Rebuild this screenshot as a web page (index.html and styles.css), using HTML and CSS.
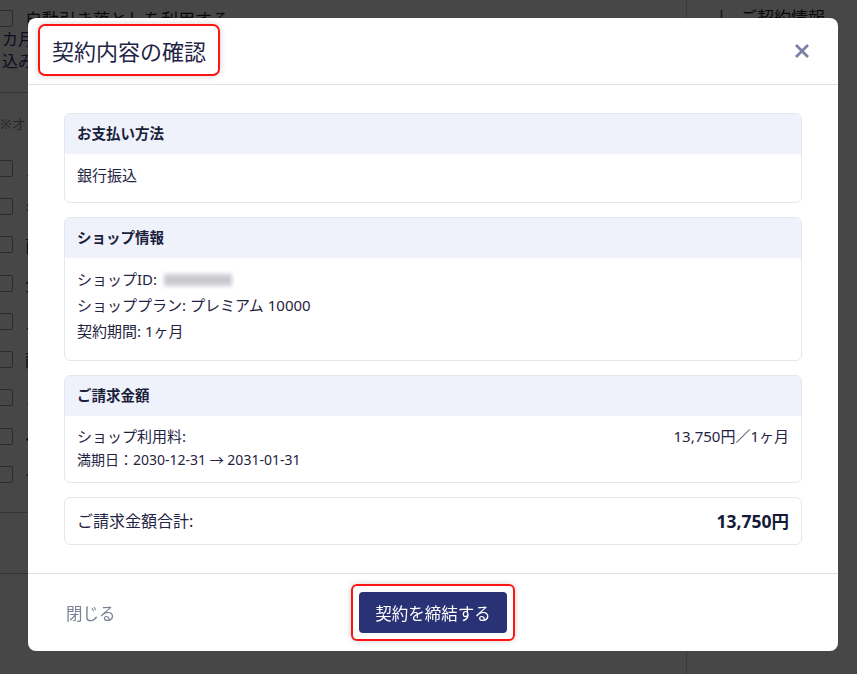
FILE: index.html
```html
<!DOCTYPE html>
<html lang="ja">
<head>
<meta charset="utf-8">
<title>契約内容の確認</title>
<link rel="stylesheet" href="styles.css">
</head>
<body>
<div class="page">
  <div class="page-main">
    <div class="bg-row bg-top"><span class="bg-check"></span><span class="bg-text">自動引き落としを利用する</span></div>
    <div class="bg-link">カ月</div>
    <div class="bg-link">込みを</div>
    <hr class="bg-hr">
    <div class="bg-note">※オ</div>
    <div class="bg-list">
      <div class="bg-row"><span class="bg-check"></span><span class="bg-text">メ</span></div>
      <div class="bg-row"><span class="bg-check"></span><span class="bg-text">キ</span></div>
      <div class="bg-row"><span class="bg-check"></span><span class="bg-text">商</span></div>
      <div class="bg-row"><span class="bg-check"></span><span class="bg-text">全</span></div>
      <div class="bg-row"><span class="bg-check"></span><span class="bg-text">ス</span></div>
      <div class="bg-row"><span class="bg-check"></span><span class="bg-text">配</span></div>
      <div class="bg-row"><span class="bg-check"></span><span class="bg-text">メ</span></div>
      <div class="bg-row"><span class="bg-check"></span><span class="bg-text">ペ</span></div>
      <div class="bg-row"><span class="bg-check"></span><span class="bg-text">ー</span></div>
    </div>
    <hr class="bg-hr bg-hr2">
    <hr class="bg-hr bg-hr3">
  </div>
  <div class="page-side">
    <div class="side-head"><span class="side-icon">↓</span>ご契約情報</div>
  </div>
</div>

<div class="overlay">
  <div class="modal">
    <div class="modal-header">
      <h2 class="modal-title">契約内容の確認</h2>
      <button class="modal-close" aria-label="閉じる">
        <svg width="16" height="16" viewBox="0 0 16 16"><path d="M2 2L14 14M14 2L2 14" stroke="#7a80a6" stroke-width="2.8" stroke-linecap="butt"/></svg>
      </button>
    </div>
    <div class="modal-body">
      <section class="card">
        <div class="card-head">お支払い方法</div>
        <div class="card-body">銀行振込</div>
      </section>
      <section class="card">
        <div class="card-head">ショップ情報</div>
        <div class="card-body info">
          <div>ショップID: <span class="blurred"></span></div>
          <div>ショッププラン: プレミアム 10000</div>
          <div>契約期間: 1ヶ月</div>
        </div>
      </section>
      <section class="card">
        <div class="card-head">ご請求金額</div>
        <div class="card-body bill">
          <div class="bill-row"><span>ショップ利用料:</span><span>13,750円／1ヶ月</span></div>
          <div class="bill-sub">満期日：2030-12-31 → 2031-01-31</div>
        </div>
      </section>
      <section class="card total">
        <span>ご請求金額合計:</span><strong>13,750円</strong>
      </section>
    </div>
    <div class="modal-footer">
      <a class="close-link">閉じる</a>
      <div class="btn-mark"><button class="btn-primary">契約を締結する</button></div>
      <span></span>
    </div>
  </div>
</div>
</body>
</html>
```
FILE: styles.css
```css
* { box-sizing: border-box; }
html, body { margin: 0; padding: 0; }
body {
  width: 857px;
  height: 674px;
  overflow: hidden;
  background: #fff;
  font-family: "Noto Sans", "Noto Sans CJK JP", sans-serif;
  color: #1f2442;
}

/* background page */
.page { display: flex; height: 674px; }
.page-main { width: 691px; margin-left: -4px; border-right: 1px solid #ccc; }
.bg-row { display: flex; align-items: center; gap: 12px; height: 38.3px; }
.bg-top { height: 20px; margin-top: 8px; }
.bg-check { width: 17px; height: 17px; border: 1.5px solid #999; border-radius: 2px; flex: none; }
.bg-text { font-size: 17px; color: #222; }
.bg-link { font-size: 16px; color: #2a3275; line-height: 22px; padding-left: 6px; }
.bg-link:first-of-type { margin-top: 2px; }
.bg-hr { border: 0; border-top: 1px solid #bbb; margin: 20px 0 20px; }
.bg-note { font-size: 14px; color: #888; padding-left: 4px; margin-bottom: 16px; }
.bg-list { display: flex; flex-direction: column; }
.bg-hr2 { margin-top: 18px; }
.bg-hr3 { margin-top: 60px; }
.page-side { flex: 1; padding: 4px 0 0 26px; }
.side-head { font-size: 17px; color: #222; display: flex; gap: 10px; }
.side-icon { color: #2a3275; }

/* overlay & modal */
.overlay {
  position: fixed;
  inset: 0;
  background: rgba(0, 0, 0, 0.72);
  display: flex;
  align-items: flex-start;
}
.modal {
  margin: 18px 0 0 28px;
  width: 810px;
  height: 633px;
  background: #fff;
  border-radius: 8px;
  display: flex;
  flex-direction: column;
}
.modal-header {
  height: 67px;
  flex: none;
  display: flex;
  align-items: center;
  justify-content: space-between;
  padding: 0 28px 0 10px;
  border-bottom: 1px solid #dde1ec;
}
.modal-title {
  margin: 0 0 2px;
  height: 52px;
  display: flex;
  align-items: center;
  padding: 0 12px;
  font-size: 22px;
  font-weight: 400;
  color: #1f2547;
  border: 2px solid #ff1414;
  border-radius: 7px;
  box-shadow: 0 0 6px rgba(0,0,0,0.18);
}
.modal-close {
  border: 0;
  background: none;
  padding: 0;
  width: 16px;
  height: 16px;
  display: flex;
}
.modal-body {
  flex: 1;
  padding: 28px 36px;
  display: flex;
  flex-direction: column;
  gap: 14px;
  font-size: 15px;
}
.card {
  border: 1px solid #e4e7ef;
  border-radius: 6px;
  overflow: hidden;
}
.card-head {
  background: #eff2fa;
  height: 40px;
  display: flex;
  align-items: center;
  padding: 0 12px 3px;
  font-weight: 700;
  font-size: 14.5px;
  color: #1a1f3c;
}
.card-body {
  padding: 8px 12px 14px;
  line-height: 26px;
}
.card-body.info { padding-bottom: 16px; }
.blurred {
  display: inline-block;
  width: 68px;
  height: 12px;
  vertical-align: -1px;
  margin-left: 3px;
  background: #c9cad0;
  filter: blur(2px);
}
.card-body.bill { padding: 8px 12px 10px; line-height: 24px; }
.bill-row { display: flex; justify-content: space-between; }
.bill-sub { font-size: 14px; }
.card.total {
  display: flex;
  justify-content: space-between;
  align-items: center;
  height: 48px;
  padding: 0 12px 2px;
  font-size: 16px;
}
.card.total strong { font-size: 17.5px; font-weight: 700; color: #141a38; }

.modal-footer {
  height: 78px;
  flex: none;
  border-top: 1px solid #dde1ec;
  display: grid;
  grid-template-columns: 1fr auto 1fr;
  align-items: center;
  padding: 0 38px;
}
.close-link { font-size: 16.5px; color: #7c8296; }
.btn-mark {
  padding: 6px 6px;
  border: 2px solid #ff1414;
  border-radius: 6px;
  box-shadow: 0 0 6px rgba(0,0,0,0.18);
}
.btn-primary {
  display: block;
  height: 41px;
  padding: 0 16px;
  border: 0;
  border-radius: 4px;
  background: #293275;
  color: #fff;
  font-family: inherit;
  font-size: 16.5px;
}
```
